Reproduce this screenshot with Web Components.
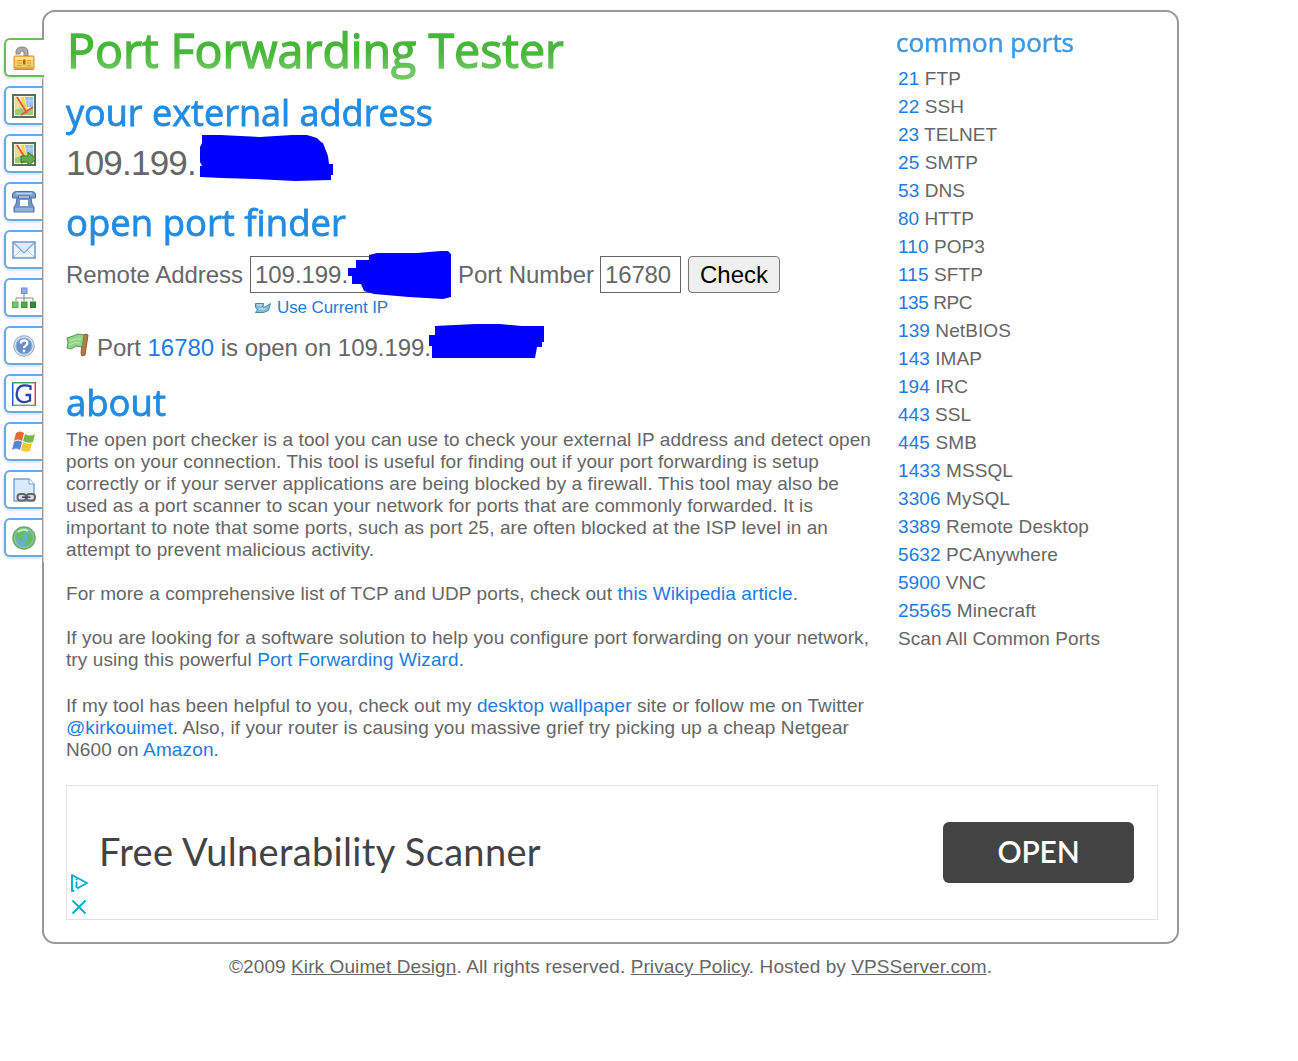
<!DOCTYPE html>
<html lang="en">
<head>
<meta charset="utf-8">
<title>Open Port Check Tool</title>
<style>
  body {
    margin: 0;
    background: #fff;
    color: #666;
    font: 19px/22px "Liberation Sans", Arial, sans-serif;
  }
</style>
</head>
<body>
<port-page></port-page>

<script>
(function() {
  const icons = {
    lock: `<path d="M4 8V6q0-5 6-5t6 5v4h-4V7q0-2-2-2T8 7v1z" fill="#aaa" stroke="#777" stroke-width=".8"/>
      <rect x="2" y="10" width="20" height="13.5" rx="1" fill="#f8cd68" stroke="#d58d24"/>
      <path d="M3 11h18v3H3z" fill="#fde39a"/><path d="M3 21h18v2H3z" fill="#efa03b"/>
      <path d="M5 14.5h5M5 17h5M5 19.500h5M15 14.500h4M15 17h4M15 19.500h4" stroke="#df9b2e"/>
      <rect x="11" y="13.500" width="2.500" height="5" fill="#a96b19"/>`,
    map: `<rect x="1" y="1" width="22" height="22" fill="#f4f2d8" stroke="#59705f" stroke-width="2"/>
      <path d="M3 3h3l9 18H3z" fill="#e7dc98"/><path d="M13 3h8v10h-6z" fill="#9bbce8"/>
      <path d="M3 21v-5l6-2 4 2 8-2v7z" fill="#96cf6c"/>
      <path d="M10 3l4 12" stroke="#f4dc45" stroke-width="3"/>
      <path d="M5 3l10 16M9 21l12-8" stroke="#e65642" stroke-width="1.800"/>
      <path d="M14 7h7M17 3v10" stroke="#c9dcf4" stroke-width=".7"/>`,
    phone: `<path d="M.5 8V4q.5-2.500 4-2.500h15q3.500 0 4 2.500v4h-6V6h-11v2z" fill="#7ba0cd" stroke="#4a70a3"/>
      <path d="M5 8h14l1 6 2 3v5H2v-5l2-3z" fill="#6f97c8" stroke="#4a70a3"/>
      <path d="M3 18h18v3.500H3z" fill="#8eb2da"/><rect x="8" y="10" width="8" height="6" fill="#fff"/>
      <path d="M4 3.500h16" stroke="#b9d0ea" stroke-width="1.500"/>`,
    mail: `<rect x="1" y="4" width="22" height="16" fill="#edf5ff" stroke="#6d97cc" stroke-width="1.500"/>
      <path d="M2 19l7-7M22 19l-7-7" stroke="#adc9ec"/>
      <path d="M2 5l10 10L22 5" fill="#dceaff" stroke="#7da5d6" stroke-width="1.200"/>`,
    tree: `<path d="M12 8v4M4 15v-3h17v3M12 12v3" fill="none" stroke="#888"/>
      <rect x="9.500" y="2" width="5.500" height="5.500" fill="#8baff0" stroke="#6e91d0"/>
      <rect x=".5" y="16" width="5.500" height="5.500" fill="#78c962" stroke="#59a94b"/>
      <rect x="9.500" y="16" width="5.500" height="5.500" fill="#4dad46" stroke="#329a32"/>
      <rect x="18.500" y="16" width="5" height="5.500" fill="#288d32" stroke="#288527"/>`,
    help: `<circle cx="12" cy="12" r="10.300" fill="#d6e2f1" stroke="#8fa9c9"/>
      <circle cx="12" cy="12" r="8" fill="#6791c5" stroke="#8eb0d8"/>
      <path d="M8.800 9.500q0-3 3.300-3t3.200 2.700q0 1.700-1.700 2.500t-1.600 2.300" fill="none" stroke="#fff" stroke-width="2.300"/>
      <circle cx="12" cy="17" r="1.400" fill="#fff"/>`,
    google: `<path d="M.7 24V.7" stroke="#3154dd" stroke-width="1.500"/><path d="M0 .7h23" stroke="#35a853" stroke-width="1.500"/>
      <path d="M23.300 0v24" stroke="#e43b35" stroke-width="1.500"/><path d="M1 23.300h22" stroke="#55b760" stroke-width="1.500"/>
      <path d="M18.500 8V4.300Q8 1.500 5.500 8 3 16 8 19q4 2.500 10-.5V13h-4.500" fill="none" stroke="#2644a8" stroke-width="2.300"/>`,
    windows: `<path d="M4 3q4-3 8 0l-2 8q-4-3-8 0z" fill="#e66936"/>
      <path d="M13 4q5 3 10 0l-2 8q-5 2-10-1z" fill="#76b947"/>
      <path d="M2 12q4-3 8 0l-2 8q-4-3-8 0z" fill="#5685d1"/>
      <path d="M11 12q5 3 9 1l-2 8q-5 2-9-1z" fill="#f7c832"/>`,
    page: `<path d="M2 1h15l5 5v17H2z" fill="#d9eafd" stroke="#76a3d7" stroke-width="1.400"/>
      <path d="M17 1v5h5" fill="#fff" stroke="#76a3d7"/>
      <rect x="5.500" y="16" width="8.500" height="6.500" rx="3" fill="#ddd" stroke="#666" stroke-width="2"/>
      <rect x="14.500" y="16" width="8.500" height="6.500" rx="3" fill="#ddd" stroke="#666" stroke-width="2"/>
      <path d="M10 19.200h8.500" stroke="#444" stroke-width="1.500"/>`,
    globe: `<circle cx="12" cy="12" r="11" fill="#8fc48f" stroke="#69ad69" stroke-width="1.500"/>
      <circle cx="12" cy="12" r="8.800" fill="#65aecf"/>
      <path d="M5 7q4-5 9-3l-1 4-3 2 1 3-2 3-3-4-3-1zM15 9l4-2q4 6-1 11l-4 2-1-4 3-2z" fill="#66bd5d"/>
      <path d="M6 6q5-4 10-1" stroke="#c6edcb" stroke-width="2" fill="none"/>`
  };
  icons.mapGo = icons.map +
    `<path d="M9 14h7v-4l8 7-8 7v-4H9z" fill="#65a84d" stroke="#39772d"/>`;

  // blue marker strokes, each drawn in its own box
  const strokes = {
    address: { w: 134, h: 47, d: "M2 0h18l40 2 32-2h15l10 3 4 4 2 1 5 13 1 8h4v11h-2v5l-36 1-40-2-33-1-22-1V31h2L0 27V12l2-4z" },
    field: { w: 103, h: 49, d: "M0 26v-8h8v-8h13V5l8-2 40 0 24-2 7 0 3 3v43l-8 2-34-2-35-3-10-3-3-7h-9v-8z" },
    result: { w: 115, h: 35, d: "M6 2l40-2h25l22 2h22v16h-2v5h-5l-2 11H3V22H0V11h6z" }
  };

  class SideTab extends HTMLElement {
    constructor() {
      super();
      this.attachShadow({ mode: "open" });
      this.shadowRoot.innerHTML = `
        <style>
          :host {
            box-sizing: border-box;
            display: flex;
            align-items: center;
            width: 38px;
            height: 39px;
            padding-left: 6px;
            border: 2px solid #62aae9;
            border-right: 0;
            border-radius: 6px 0 0 6px;
            background: #fff;
            box-shadow: -1px 2px 2px #e4e4e4;
          }
          :host([active]) {
            width: 40px;
            border-color: #67bd58;
            position: relative;
            z-index: 2;
          }
          svg { display: block; fill: none; }
        </style>
        <svg width="24" height="24" viewBox="0 0 24 24">${icons[this.getAttribute("icon")]}</svg>`;
    }
  }

  class SectionTitle extends HTMLElement {
    constructor() {
      super();
      this.attachShadow({ mode: "open" });
      this.shadowRoot.innerHTML = `
        <style>
          :host {
            display: block;
            height: 42px;
            font: 37px/43px "Open Sans", sans-serif;
            color: #228be2;
            white-space: nowrap;
            -webkit-text-stroke: .8px #228be2;
          }
          :host([kind="main"]) {
            height: 60px;
            font-size: 47px;
            line-height: 61px;
            -webkit-text-stroke: 1.4px transparent;
          }
          :host([kind="main"]) span {
            padding-bottom: 4px;
            background: linear-gradient(#48b63a 50%, #70c864 80%);
            -webkit-background-clip: text;
            color: transparent;
          }
          :host([kind="small"]) {
            height: 40px;
            font-size: 26px;
            line-height: 41px;
            color: #3a98e5;
            -webkit-text-stroke: .5px #3a98e5;
          }
          span { display: inline-block; transform-origin: 0 0; }
        </style>
        <span><slot></slot></span>`;
    }

    connectedCallback() {
      const span = this.shadowRoot.querySelector("span");
      const ratio = this.getAttribute("width") / span.getBoundingClientRect().width;
      span.style.transform = "scaleX(" + ratio + ")";
    }
  }

  class MarkerStroke extends HTMLElement {
    constructor() {
      super();
      const s = strokes[this.getAttribute("shape")];
      this.attachShadow({ mode: "open" });
      this.shadowRoot.innerHTML = `
        <style>
          :host { position: absolute; z-index: 1; }
          svg { display: block; }
        </style>
        <svg width="${s.w}" height="${s.h}" viewBox="0 0 ${s.w} ${s.h}"><path d="${s.d}" fill="#00f"/></svg>`;
    }
  }

  class AdBanner extends HTMLElement {
    constructor() {
      super();
      this.attachShadow({ mode: "open" });
      this.shadowRoot.innerHTML = `
        <style>
          :host {
            box-sizing: border-box;
            position: relative;
            display: flex;
            align-items: center;
            justify-content: space-between;
            width: 1092px;
            height: 135px;
            padding: 0 23px 0 32px;
            border: 1px solid #e3e3e3;
            font-family: Lato, sans-serif;
            color: #434343;
          }
          .headline { margin-bottom: 4px; font-size: 38px; line-height: 50px; }
          .open {
            display: flex;
            align-items: center;
            justify-content: center;
            width: 191px;
            height: 61px;
            border-radius: 6px;
            background: #434343;
            color: #fff;
            font-size: 30px;
            line-height: 58px;
            font-weight: 600;
          }
          .open fit-text { height: 61px; }
          .marks { position: absolute; left: 3px; top: 87px; }
        </style>
        <fit-text class="headline" width="442"><slot></slot></fit-text>
        <div class="open"><fit-text width="82">OPEN</fit-text></div>
        <svg class="marks" width="20" height="44" fill="none" stroke="#00aecd" stroke-width="1.900">
          <path d="M4.500 17.500L2 18V2l15 8-10 5.500" stroke-linejoin="round"/>
          <path d="M6.500 8.500V15M6.500 5.500v1.700" />
          <path d="M2.500 27.500l13 13M15.500 27.500l-13 13"/>
        </svg>`;
    }
  }

  class PortList extends HTMLElement {
    constructor() {
      super();
      const ports = [
        [21, "FTP", 63], [22, "SSH", 66], [23, "TELNET", 99], [25, "SMTP", 80],
        [53, "DNS", 67], [80, "HTTP", 76], [110, "POP3", 87], [115, "SFTP", 85],
        [135, "RPC", 74], [139, "NetBIOS", 113], [143, "IMAP", 84], [194, "IRC", 70],
        [443, "SSL", 73], [445, "SMB", 79], [1433, "MSSQL", 115], [3306, "MySQL", 112],
        [3389, "Remote Desktop", 191], [5632, "PCAnywhere", 160], [5900, "VNC", 88],
        [25565, "Minecraft", 138]
      ];
      this.attachShadow({ mode: "open" });
      this.shadowRoot.innerHTML = `
        <style>
          :host { display: block; padding: 1px 0 0 2px; }
          div { height: 28px; line-height: 28px; }
          b { font-weight: normal; color: #1f7be0; }
        </style>
        ${ports.map(p => `<div><fit-text width="${p[2]}"><b>${p[0]}</b> ${p[1]}</fit-text></div>`).join("")}
        <div><fit-text width="202">Scan All Common Ports</fit-text></div>`;
    }
  }

  class PortPage extends HTMLElement {
    constructor() {
      super();
      this.attachShadow({ mode: "open" });
      this.shadowRoot.innerHTML = `
        <style>
          :host { display: block; width: 1298px; height: 1061px; overflow: hidden; }
          a { color: #1f7be0; text-decoration: none; }
          .layout { display: grid; grid-template-columns: 42px 1137px; padding-top: 10px; }
          nav {
            position: relative;
            z-index: 1;
            display: flex;
            flex-direction: column;
            gap: 9px;
            height: 524px;
            padding: 28px 0 0 4px;
          }
          nav::after {
            content: "";
            position: absolute;
            left: 43px;
            top: 67px;
            bottom: 0;
            width: 1px;
            background: #d4d4d4;
          }
          .frame {
            box-sizing: border-box;
            height: 934px;
            padding: 8px 19px 0 22px;
            border: 2px solid #999;
            border-radius: 13px;
          }
          .columns { display: grid; grid-template-columns: 830px 1fr; height: 765px; }
          .row { position: relative; display: flex; align-items: center; white-space: nowrap; }
          .ip { height: 40px; margin: 11px 0 17px; font-size: 35px; line-height: 40px; }
          .form { height: 37px; margin-top: 14px; font-size: 24px; line-height: 36px; }
          .box {
            box-sizing: border-box;
            height: 37px;
            padding-left: 4px;
            border: 1px solid #666;
            line-height: 36px;
          }
          .check {
            box-sizing: border-box;
            width: 92px;
            height: 37px;
            margin-left: 7px;
            padding: 0;
            border: 1px solid #767676;
            border-radius: 4px;
            background: #efefef;
            color: #000;
            font: 24px/34px "Liberation Sans", Arial, sans-serif;
          }
          .current { height: 18px; margin: 6px 0 17px 189px; gap: 6px; font-size: 17px; line-height: 18px; }
          .result { height: 27px; margin-bottom: 19px; gap: 8px; font-size: 24px; line-height: 27px; }
          .about { padding-top: 7px; }
          p { margin: 0 0 22px; }
          p.wide { margin-bottom: 24px; }
          footer { height: 44px; padding: 1px 0 0 229px; line-height: 44px; }
          footer a { color: inherit; text-decoration: underline; }
        </style>
        <div class="layout">
          <nav>
            <side-tab icon="lock" active></side-tab>
            <side-tab icon="map"></side-tab>
            <side-tab icon="mapGo"></side-tab>
            <side-tab icon="phone"></side-tab>
            <side-tab icon="mail"></side-tab>
            <side-tab icon="tree"></side-tab>
            <side-tab icon="help"></side-tab>
            <side-tab icon="google"></side-tab>
            <side-tab icon="windows"></side-tab>
            <side-tab icon="page"></side-tab>
            <side-tab icon="globe"></side-tab>
          </nav>
          <div class="frame">
            <div class="columns">
              <main>
                <section-title kind="main" width="497" style="margin-left:1px">Port Forwarding Tester</section-title>
                <section-title width="367" style="margin-top:10px">your external address</section-title>
                <div class="row ip">
                  <fit-text width="130">109.199.</fit-text>
                  <marker-stroke shape="address" style="left:134px;top:-8px"></marker-stroke>
                </div>
                <section-title width="280">open port finder</section-title>
                <div class="row form">
                  <fit-text width="177" style="margin-right:7px">Remote Address</fit-text>
                  <div class="box" style="width:201px"><fit-text width="93">109.199.</fit-text></div>
                  <fit-text width="136" style="margin:0 6px 0 7px">Port Number</fit-text>
                  <div class="box" style="width:81px"><fit-text width="66">16780</fit-text></div>
                  <button class="check"><fit-text width="68">Check</fit-text></button>
                  <marker-stroke shape="field" style="left:282px;top:-6px"></marker-stroke>
                </div>
                <div class="row current">
                  <svg width="16" height="12" viewBox="0 0 16 12">
                    <path d="M.5 1.500h8L8 5h2l5.500-3.500-2 7-5 2h-8l2-3-2-2z" fill="#83bdd8" stroke="#478aa8"/>
                    <path d="M2 3h5M4 7h6" stroke="#d4edf5"/>
                  </svg>
                  <a><fit-text width="111">Use Current IP</fit-text></a>
                </div>
                <div class="row result">
                  <svg width="23" height="24" viewBox="0 0 23 24" style="margin-top:-5px">
                    <path d="M19 1l3 1-3 20-3 1-1-3 2-16z" fill="#b77b3b" stroke="#8b5b2c"/>
                    <path d="M1 5l6-2 5-2 6 1-2 12-6-1-5 3-4-1 1-5z" fill="#92d483" stroke="#56945b"/>
                    <path d="M4 8q6-3 11-2M3 12q6-4 11-2" stroke="#bbebae" fill="none"/>
                  </svg>
                  <fit-text width="334">Port <a>16780</a> is open on 109.199.</fit-text>
                  <marker-stroke shape="result" style="left:363px;top:-10px"></marker-stroke>
                </div>
                <section-title width="100">about</section-title>
                <div class="about">
                  <p>
                    <fit-text line width="805">The open port checker is a tool you can use to check your external IP address and detect open</fit-text>
                    <fit-text line width="753">ports on your connection. This tool is useful for finding out if your port forwarding is setup</fit-text>
                    <fit-text line width="773">correctly or if your server applications are being blocked by a firewall. This tool may also be</fit-text>
                    <fit-text line width="747">used as a port scanner to scan your network for ports that are commonly forwarded. It is</fit-text>
                    <fit-text line width="762">important to note that some ports, such as port 25, are often blocked at the ISP level in an</fit-text>
                    <fit-text line width="308">attempt to prevent malicious activity.</fit-text>
                  </p>
                  <p><fit-text line width="732">For more a comprehensive list of TCP and UDP ports, check out <a>this Wikipedia article</a>.</fit-text></p>
                  <p class="wide">
                    <fit-text line width="803">If you are looking for a software solution to help you configure port forwarding on your network,</fit-text>
                    <fit-text line width="398">try using this powerful <a>Port Forwarding Wizard</a>.</fit-text>
                  </p>
                  <p>
                    <fit-text line width="798">If my tool has been helpful to you, check out my <a>desktop wallpaper</a> site or follow me on Twitter</fit-text>
                    <fit-text line width="783"><a>@kirkouimet</a>. Also, if your router is causing you massive grief try picking up a cheap Netgear</fit-text>
                    <fit-text line width="153">N600 on <a>Amazon</a>.</fit-text>
                  </p>
                </div>
              </main>
              <aside>
                <section-title kind="small" width="178" style="padding:2px 0">common ports</section-title>
                <port-list></port-list>
              </aside>
            </div>
            <ad-banner>Free Vulnerability Scanner</ad-banner>
          </div>
        </div>
        <footer><fit-text width="763">©2009 <a>Kirk Ouimet Design</a>. All rights reserved. <a>Privacy Policy</a>. Hosted by <a>VPSServer.com</a>.</fit-text></footer>`;
    }
  }

  // Spreads its text to the given width with letter-spacing
  class FitText extends HTMLElement {
    constructor() {
      super();
      this.attachShadow({ mode: "open" });
      this.shadowRoot.innerHTML = `
        <style>
          :host { display: inline-block; white-space: nowrap; flex: none; }
          :host([line]) { display: table; height: 22px; }
        </style>
        <slot></slot>`;
    }

    connectedCallback() {
      const slot = this.querySelector("slot");
      const text = slot ? slot.assignedNodes().map(n => n.textContent).join("") : this.textContent;
      const spare = this.getAttribute("width") - this.getBoundingClientRect().width;
      this.style.letterSpacing = spare / text.trim().length + "px";
    }
  }

  customElements.define("side-tab", SideTab);
  customElements.define("section-title", SectionTitle);
  customElements.define("marker-stroke", MarkerStroke);
  customElements.define("ad-banner", AdBanner);
  customElements.define("port-list", PortList);
  customElements.define("port-page", PortPage);
  customElements.define("fit-text", FitText);
})();
</script>
</body>
</html>
